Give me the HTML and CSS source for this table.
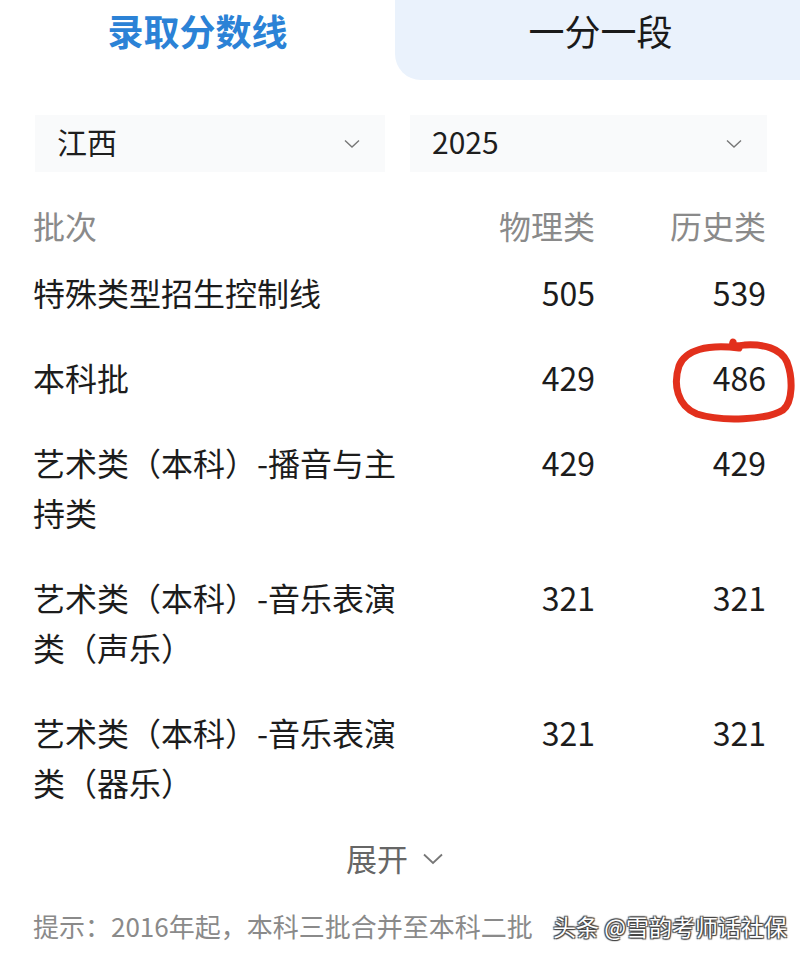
FILE: index.html
```html
<!DOCTYPE html>
<html lang="zh">
<head>
<meta charset="utf-8">
<link rel="stylesheet" href="styles.css">
</head>
<body>
<div class="page">
  <div class="tabs">
    <div class="tab active">录取分数线</div>
    <div class="tab other">一分一段</div>
  </div>
  <div class="filters">
    <div class="select left"><span>江西</span><svg class="chev" width="16" height="10" viewBox="0 0 16 10"><path d="M1 1.5 L8 8 L15 1.5" fill="none" stroke="#777" stroke-width="1.4"/></svg></div>
    <div class="select right"><span>2025</span><svg class="chev" width="16" height="10" viewBox="0 0 16 10"><path d="M1 1.5 L8 8 L15 1.5" fill="none" stroke="#777" stroke-width="1.4"/></svg></div>
  </div>
  <div class="table">
    <div class="row head"><div class="name">批次</div><div class="num">物理类</div><div class="num">历史类</div></div>
    <div class="row"><div class="name">特殊类型招生控制线</div><div class="num">505</div><div class="num">539</div></div>
    <div class="row"><div class="name">本科批</div><div class="num">429</div><div class="num mark">486<svg class="circle" width="130" height="90" viewBox="0 0 130 90"><path d="M72 12 C40 8 18 14 12 30 C6 48 10 70 30 78 C55 86 100 84 116 74 C126 66 126 42 120 26 C114 12 96 8 78 9 C70 10 64 11 66 6" fill="none" stroke="#e2301c" stroke-width="7" stroke-linecap="round"/></svg></div></div>
    <div class="row"><div class="name">艺术类（本科）-播音与主持类</div><div class="num">429</div><div class="num">429</div></div>
    <div class="row"><div class="name">艺术类（本科）-音乐表演类（声乐）</div><div class="num">321</div><div class="num">321</div></div>
    <div class="row"><div class="name">艺术类（本科）-音乐表演类（器乐）</div><div class="num">321</div><div class="num">321</div></div>
  </div>
  <div class="expand">展开<svg class="chev2" width="22" height="14" viewBox="0 0 22 14"><path d="M2 2.5 L11 11 L20 2.5" fill="none" stroke="#777" stroke-width="1.8"/></svg></div>
  <div class="tip">提示：2016年起，本科三批合并至本科二批<span class="wm">头条 @雪韵考师话社保</span></div>
</div>
</body>
</html>
```
FILE: styles.css
```css
* { box-sizing: border-box; }
html, body { margin: 0; padding: 0; background: #fff; }
body { font-family: "Noto Sans CJK SC", "Noto Sans", sans-serif; color: #1c1c1c; }
.page { width: 800px; height: 960px; overflow: hidden; position: relative; }
.tabs { display: flex; height: 80px; }
.tab { height: 80px; display: flex; align-items: center; justify-content: center; font-size: 36px; line-height: 1; padding-bottom: 20px; }
.tab.active { width: 395px; color: #2b82d6; font-weight: 700; }
.tab.other { flex: 1; background: #eaf2fc; border-bottom-left-radius: 26px; color: #1a1a1a; padding-left: 6px; }
.filters { display: flex; gap: 25px; margin: 35px 0 0 35px; }
.select { height: 57px; background: #f9fafb; display: flex; align-items: center; justify-content: space-between; padding: 0 25px 6px 22px; font-size: 30px; color: #1e1e1e; }
.select.left { width: 350px; }
.select.right { width: 357px; }
.chev { margin-top: 6px; }
.table { margin: 28px 34px 0 33px; }
.row { display: grid; grid-template-columns: 376px 186px 171px; padding: 17px 0 18px; font-size: 32px; line-height: 50px; }
.row.head { padding: 0; color: #8a8a8a; }
.num { text-align: right; }
.mark { position: relative; }
.circle { position: absolute; right: -31px; top: -16px; }
.expand { margin-top: 7px; height: 50px; display: flex; align-items: center; justify-content: center; gap: 14px; font-size: 31px; color: #666; padding-right: 10px; }
.chev2 { margin-top: 4px; }
.tip { position: relative; margin: 25px 0 0 33px; height: 40px; line-height: 38px; font-size: 26px; color: #8a8a8a; white-space: nowrap; }
.wm { position: absolute; left: 520px; top: 0; font-size: 23px; color: #fff; text-shadow: 0 0 1px #444, 1px 1px 1px #444, -1px -1px 1px #444, 1px -1px 1px #444, -1px 1px 1px #444; }
```
